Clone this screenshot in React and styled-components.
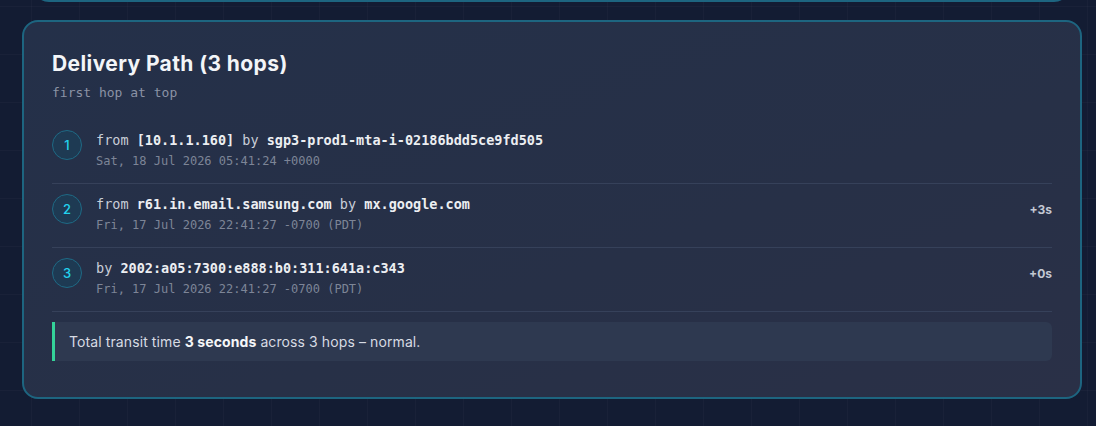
import styled, { createGlobalStyle } from 'styled-components'

const GlobalStyle = createGlobalStyle`
  html, body {
    margin: 0;
    padding: 0;
  }
  body {
    background-color: #131c33;
    background-image:
      linear-gradient(rgba(255, 255, 255, 0.025) 1px, transparent 1px),
      linear-gradient(90deg, rgba(255, 255, 255, 0.025) 1px, transparent 1px);
    background-size: 48px 48px;
    background-position: 31px 6px;
    font-family: 'Inter', 'Noto Sans', sans-serif;
    overflow: hidden;
  }
`

const Page = styled.div`
  width: 1096px;
  height: 426px;
  box-sizing: border-box;
  padding: 0 14px 0 22px;
  display: flex;
  flex-direction: column;
  overflow: hidden;
`

const PrevCard = styled.div`
  flex: none;
  height: 36px;
  margin: -38px 12px 0 11px;
  border: 2px solid #1d6580;
  border-radius: 16px;
  background: #222c44;
`

const Card = styled.section`
  flex: none;
  margin-top: 18px;
  width: 1060px;
  box-sizing: border-box;
  padding: 28px 28px 36px;
  border: 2px solid #1d6580;
  border-radius: 16px;
  background: linear-gradient(160deg, #243049 0%, #273047 60%, #2a3047 100%);
`

const Title = styled.h2`
  margin: 0;
  font-family: 'Inter', sans-serif;
  font-weight: 700;
  font-size: 21px;
  line-height: 28px;
  letter-spacing: 0.4px;
  color: #f3f5f8;
`

const Subtitle = styled.div`
  margin-top: 6px;
  font-family: 'DejaVu Sans Mono', monospace;
  font-size: 13px;
  line-height: 18px;
  color: #8b93a5;
`

const HopList = styled.div`
  margin-top: 18px;
  display: flex;
  flex-direction: column;
`

const HopRow = styled.div`
  display: flex;
  align-items: flex-start;
  gap: 14px;
  padding: 10px 0 14px;
  border-bottom: 1px solid #36415a;
`

const HopIndex = styled.div`
  flex: none;
  width: 30px;
  height: 30px;
  box-sizing: border-box;
  border-radius: 50%;
  border: 1.5px solid #1e6a85;
  background: #1e3a53;
  display: flex;
  align-items: center;
  justify-content: center;
  font-family: 'Inter', sans-serif;
  font-weight: 500;
  font-size: 13px;
  color: #22d3ee;
`

const HopBody = styled.div`
  flex: 1;
  display: flex;
  flex-direction: column;
  gap: 3px;
`

const HopLine = styled.div`
  font-family: 'DejaVu Sans Mono', monospace;
  font-size: 13.5px;
  line-height: 20px;
  color: #c9ced8;
  white-space: nowrap;
`

const Host = styled.b`
  font-weight: 700;
  color: #eceef2;
`

const Stamp = styled.div`
  font-family: 'DejaVu Sans Mono', monospace;
  font-size: 12px;
  line-height: 16px;
  color: #7d8597;
`

const Delta = styled.div`
  flex: none;
  margin-top: 8px;
  font-family: 'Inter', sans-serif;
  font-weight: 700;
  font-size: 12px;
  line-height: 16px;
  color: #c3c8d3;
`

const Summary = styled.div`
  margin-top: 10px;
  padding: 10px 16px 10px 14px;
  border-left: 3px solid #34d399;
  border-radius: 0 6px 6px 0;
  background: #2e3950;
  font-family: 'Inter', sans-serif;
  font-size: 14px;
  line-height: 19px;
  letter-spacing: 0.1px;
  color: #d7dbe3;

  strong {
    font-weight: 700;
    color: #f5f6f8;
  }
`

const hops = [
  {
    from: '[10.1.1.160]',
    by: 'sgp3-prod1-mta-i-02186bdd5ce9fd505',
    date: 'Sat, 18 Jul 2026 05:41:24 +0000',
    delta: null,
  },
  {
    from: 'r61.in.email.samsung.com',
    by: 'mx.google.com',
    date: 'Fri, 17 Jul 2026 22:41:27 -0700 (PDT)',
    delta: '+3s',
  },
  {
    from: null,
    by: '2002:a05:7300:e888:b0:311:641a:c343',
    date: 'Fri, 17 Jul 2026 22:41:27 -0700 (PDT)',
    delta: '+0s',
  },
]

export default function App() {
  return (
    <Page>
      <GlobalStyle />
      <PrevCard />
      <Card>
        <Title>Delivery Path (3 hops)</Title>
        <Subtitle>first hop at top</Subtitle>
        <HopList>
          {hops.map((hop, i) => (
            <HopRow key={i}>
              <HopIndex>{i + 1}</HopIndex>
              <HopBody>
                <HopLine>
                  {hop.from && (
                    <>
                      from <Host>{hop.from}</Host>{' '}
                    </>
                  )}
                  by <Host>{hop.by}</Host>
                </HopLine>
                <Stamp>{hop.date}</Stamp>
              </HopBody>
              {hop.delta && <Delta>{hop.delta}</Delta>}
            </HopRow>
          ))}
        </HopList>
        <Summary>
          Total transit time <strong>3 seconds</strong> across 3 hops – normal.
        </Summary>
      </Card>
    </Page>
  )
}
